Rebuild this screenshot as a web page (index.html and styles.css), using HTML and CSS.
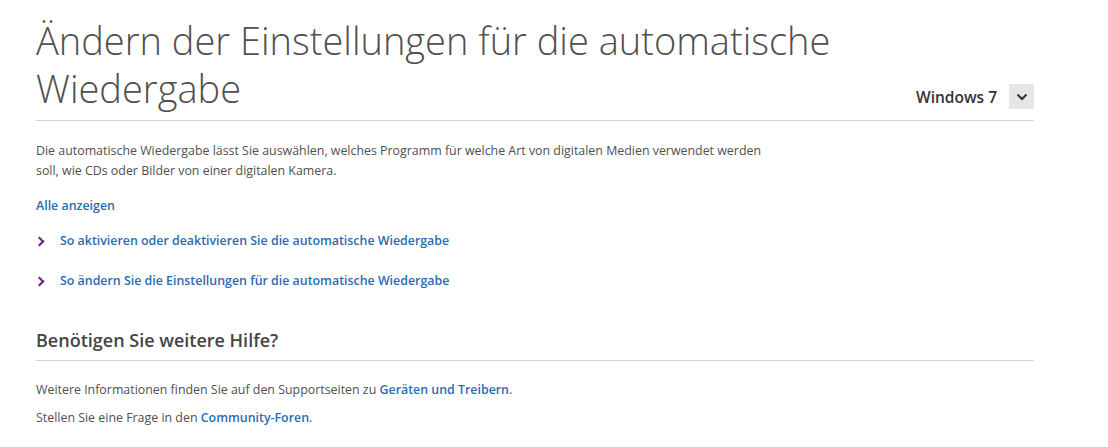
FILE: index.html
```html
<!DOCTYPE html>
<html lang="de"><head>
<meta charset="UTF-8">
<link rel="stylesheet" href="styles.css">
<title>Ändern der Einstellungen für die automatische Wiedergabe</title>
</head>
<body>
<div class="page">
 <div class="head">
  <h1 class="title">Ändern der Einstellungen für die automatische Wiedergabe</h1>
  <div class="version">
   <span>Windows 7</span>
   <button class="picker" type="button">
    <svg width="12" height="8" viewBox="0 0 12 8"><path d="M1.5 1.5 L6 6 L10.5 1.5" fill="none" stroke="#333" stroke-width="2"/></svg>
   </button>
  </div>
 </div>
 <p class="intro">Die automatische Wiedergabe lässt Sie auswählen, welches Programm für welche Art von digitalen Medien verwendet werden soll, wie CDs oder Bilder von einer digitalen Kamera.</p>
 <a class="showall" href="">Alle anzeigen</a>
 <ul class="topics">
  <li><a href="">So aktivieren oder deaktivieren Sie die automatische Wiedergabe</a></li>
  <li><a href="">So ändern Sie die Einstellungen für die automatische Wiedergabe</a></li>
 </ul>
 <h2 class="help">Benötigen Sie weitere Hilfe?</h2>
 <p class="more">Weitere Informationen finden Sie auf den Supportseiten zu <a href="">Geräten und Treibern</a>.</p>
 <p class="more">Stellen Sie eine Frage in den <a href="">Community-Foren</a>.</p>
</div>
</body></html>
```

FILE: styles.css
```css
:root {
  font-family: "Open Sans", "Noto Sans", sans-serif;
  color: #505050;
}
body {
  margin: 0;
}
a {
  color: #2a6cb3;
  text-decoration: none;
  font-weight: 600;
}
.page {
  width: 998px;
  margin-left: 36px;
}
/* header */
.head {
  display: flex;
  align-items: flex-end;
  justify-content: space-between;
  border-bottom: 1px solid #d2d2d2;
  padding-top: 16px;
  padding-bottom: 8px;
}
.title {
  margin: 0;
  max-width: 840px;
  font-size: 38px;
  font-weight: 300;
  line-height: 48px;
  color: #505050;
}
.version {
  display: flex;
  align-items: center;
  gap: 12px;
  margin-bottom: 3px;
  font-size: 15.5px;
  font-weight: 600;
  color: #333;
}
.picker {
  width: 25px;
  height: 25px;
  border: 0;
  padding: 0;
  background: #e6e6e6;
  display: flex;
  align-items: center;
  justify-content: center;
}
/* intro */
.intro {
  margin: 20px 0 0;
  max-width: 740px;
  font-size: 12.4px;
  line-height: 20px;
}
.showall {
  display: inline-block;
  margin-top: 15px;
  font-size: 12.4px;
  line-height: 20px;
}
.topics {
  list-style: none;
  margin: 15px 0 0;
  padding: 0;
}
.topics li {
  font-size: 12.4px;
  line-height: 20px;
  margin-bottom: 20px;
  display: flex;
  align-items: center;
}
.topics li::before {
  content: "";
  width: 5px;
  height: 5px;
  border-top: 2px solid #68217a;
  border-right: 2px solid #68217a;
  transform: rotate(45deg);
  margin: 0 17px 0 0;
}
/* help */
.help {
  margin: 37px 0 0;
  padding-bottom: 8px;
  border-bottom: 1px solid #d2d2d2;
  font-size: 18px;
  font-weight: 600;
  line-height: 24px;
  color: #444;
}
.more {
  margin: 19px 0 0;
  font-size: 12.4px;
  line-height: 20px;
}
.more + .more {
  margin-top: 8px;
}
```
